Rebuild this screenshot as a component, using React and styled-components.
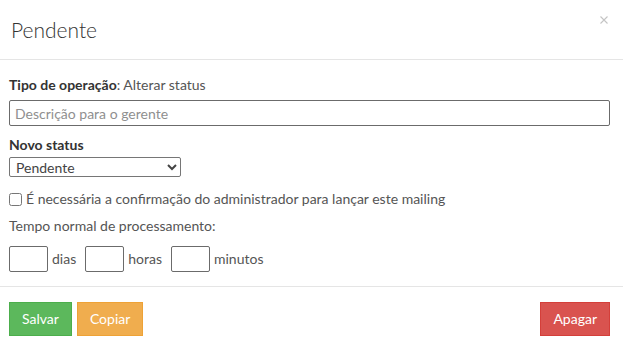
import styled, { createGlobalStyle } from 'styled-components'

const GlobalStyle = createGlobalStyle`
  html, body {
    margin: 0;
    padding: 0;
    background: #fff;
  }
  body {
    font-family: Lato, 'Open Sans', sans-serif;
    font-size: 14px;
    line-height: 20px;
    color: #555;
  }
  * {
    box-sizing: border-box;
  }
`

const Modal = styled.div`
  width: 623px;
  background: #fff;
`

const Header = styled.div`
  display: flex;
  justify-content: space-between;
  align-items: flex-start;
  height: 60px;
  padding: 15px 15px 0 11px;
  border-bottom: 1px solid #e5e5e5;
`

const Title = styled.h4`
  margin: 0;
  font-size: 21px;
  font-weight: 300;
  line-height: 29px;
  color: #333;
`

const Close = styled.button`
  display: flex;
  border: 0;
  background: none;
  padding: 0;
  margin-top: 1px;
  cursor: pointer;
`

const Body = styled.div`
  padding: 15px 13px 14px 9px;
  border-bottom: 1px solid #e5e5e5;
`

const Line = styled.div`
  line-height: 20px;
  margin-top: ${(p) => p.$top || 0}px;
  display: flex;
  align-items: center;
`

const Strong = styled.b`
  font-weight: 700;
  color: #333;
`

const TextInput = styled.input`
  display: block;
  width: 100%;
  height: 26px;
  margin-top: 5px;
  padding: 0 5px;
  border: 1px solid #6b6b6b;
  border-radius: 2px;
  font-family: inherit;
  font-size: 14px;
  color: #555;
  outline: none;

  &::placeholder {
    color: #8f8f8f;
  }
`

const Select = styled.select`
  display: block;
  width: 172px;
  height: 20px;
  margin-top: 2px;
  padding: 0 2px;
  border: 1px solid #767676;
  border-radius: 2px;
  background: #fff;
  font-family: inherit;
  font-size: 14px;
  color: #444;
`

const Check = styled.input`
  width: 13px;
  height: 13px;
  margin: 0 4px 0 0;
`

const TimeRow = styled.div`
  display: flex;
  align-items: center;
  margin-top: 10px;
`

const TimeBox = styled.input`
  width: 39px;
  height: 26px;
  border: 1px solid #6b6b6b;
  border-radius: 2px;
  padding: 0 4px;
  font-family: inherit;
  margin-right: 4px;
`

const Unit = styled.span`
  margin-right: 9px;
`

const Footer = styled.div`
  display: flex;
  align-items: center;
  gap: 5px;
  padding: 15px 13px 15px 9px;
`

const colors = {
  success: ['#5cb85c', '#4cae4c'],
  warning: ['#f0ad4e', '#eea236'],
  danger: ['#d9534f', '#d43f3a'],
}

const Button = styled.button`
  height: 34px;
  padding: 6px 12px;
  border: 1px solid ${(p) => colors[p.$kind][1]};
  border-radius: 0;
  background: ${(p) => colors[p.$kind][0]};
  color: #fff;
  font-family: inherit;
  font-size: 14px;
  line-height: 20px;
  cursor: pointer;
  margin-left: ${(p) => (p.$push ? 'auto' : '0')};
`

export default function App() {
  return (
    <>
      <GlobalStyle />
      <Modal>
        <Header>
          <Title>Pendente</Title>
          <Close aria-label="Fechar">
            <svg width="8" height="8" viewBox="0 0 8 8">
              <path d="M0.5 0.5 L7.5 7.5 M7.5 0.5 L0.5 7.5" stroke="#c4c4c4" strokeWidth="1.1" />
            </svg>
          </Close>
        </Header>
        <Body>
          <Line>
            <span>
              <Strong>Tipo de operação</Strong>: Alterar status
            </span>
          </Line>
          <TextInput placeholder="Descrição para o gerente" />
          <Line $top={9}>
            <Strong>Novo status</Strong>
          </Line>
          <Select defaultValue="pendente">
            <option value="pendente">Pendente</option>
            <option value="aprovado">Aprovado</option>
            <option value="cancelado">Cancelado</option>
          </Select>
          <Line $top={12}>
            <Check type="checkbox" />
            É necessária a confirmação do administrador para lançar este mailing
          </Line>
          <Line $top={7}>Tempo normal de processamento:</Line>
          <TimeRow>
            <TimeBox />
            <Unit>dias</Unit>
            <TimeBox />
            <Unit>horas</Unit>
            <TimeBox />
            <Unit>minutos</Unit>
          </TimeRow>
        </Body>
        <Footer>
          <Button $kind="success">Salvar</Button>
          <Button $kind="warning">Copiar</Button>
          <Button $kind="danger" $push>
            Apagar
          </Button>
        </Footer>
      </Modal>
    </>
  )
}
